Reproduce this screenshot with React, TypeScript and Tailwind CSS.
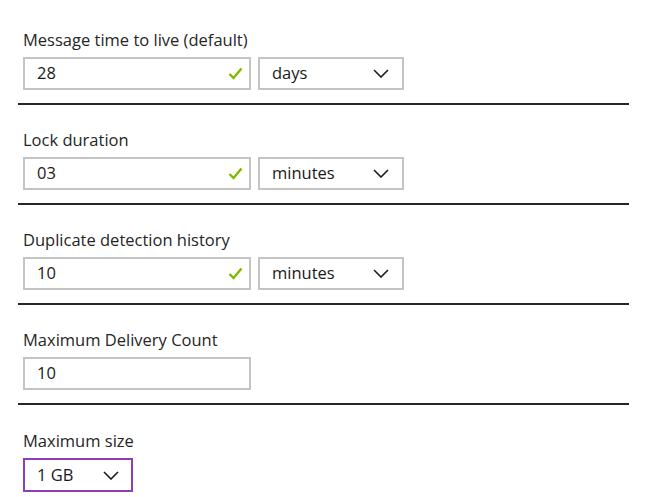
import React from 'react';

const font = { fontFamily: '"Open Sans", "Noto Sans", sans-serif' };

const Check = () => (
  <svg width="15" height="13" viewBox="0 0 15 13" className="shrink-0">
    <path d="M1.5 7 L5.5 11 L13.5 1.5" fill="none" stroke="#7fba00" strokeWidth="2.4" />
  </svg>
);

const Chevron = () => (
  <svg width="16" height="9" viewBox="0 0 16 9" className="shrink-0">
    <path d="M1 1 L8 8 L15 1" fill="none" stroke="#1a1a1a" strokeWidth="1.6" />
  </svg>
);

interface FieldProps {
  label: string;
  value: string;
  unit?: string;
  valid?: boolean;
}

const Field: React.FC<FieldProps> = ({ label, value, unit, valid }) => (
  <div className="pt-[24px] pb-[13px] border-b-2 border-[#262626]">
    <div className="h-[21px] leading-[21px] text-[16.5px] text-[#262626] ml-[5px] mb-[7px]">{label}</div>
    <div className="flex gap-[7px] ml-[5px]">
      <div className="w-[228px] h-[33px] border-2 border-[#c4c4c4] flex items-center pl-3 pr-[6px] text-[16.5px] text-[#1a1a1a]">
        <span className="flex-1">{value}</span>
        {valid && <Check />}
      </div>
      {unit && (
        <div className="w-[146px] h-[33px] border-2 border-[#c4c4c4] flex items-center pl-3 pr-[13px] text-[16.5px] text-[#1a1a1a]">
          <span className="flex-1">{unit}</span>
          <Chevron />
        </div>
      )}
    </div>
  </div>
);

export default function App() {
  return (
    <div className="w-[650px] h-[497px] bg-white overflow-hidden pt-[5px]" style={font}>
      <div className="ml-[18px] w-[611px]">
        <Field label="Message time to live (default)" value="28" unit="days" valid />
        <Field label="Lock duration" value="03" unit="minutes" valid />
        <Field label="Duplicate detection history" value="10" unit="minutes" valid />
        <Field label="Maximum Delivery Count" value="10" />
        <div className="pt-[25px]">
          <div className="h-[21px] leading-[21px] text-[16.5px] text-[#262626] ml-[5px] mb-[7px]">Maximum size</div>
          <div className="ml-[5px] w-[110px] h-[34px] border-2 border-[#8d3fb3] flex items-center pl-3 pr-3 text-[16.5px] text-[#1a1a1a]">
            <span className="flex-1">1 GB</span>
            <Chevron />
          </div>
        </div>
      </div>
    </div>
  );
}
